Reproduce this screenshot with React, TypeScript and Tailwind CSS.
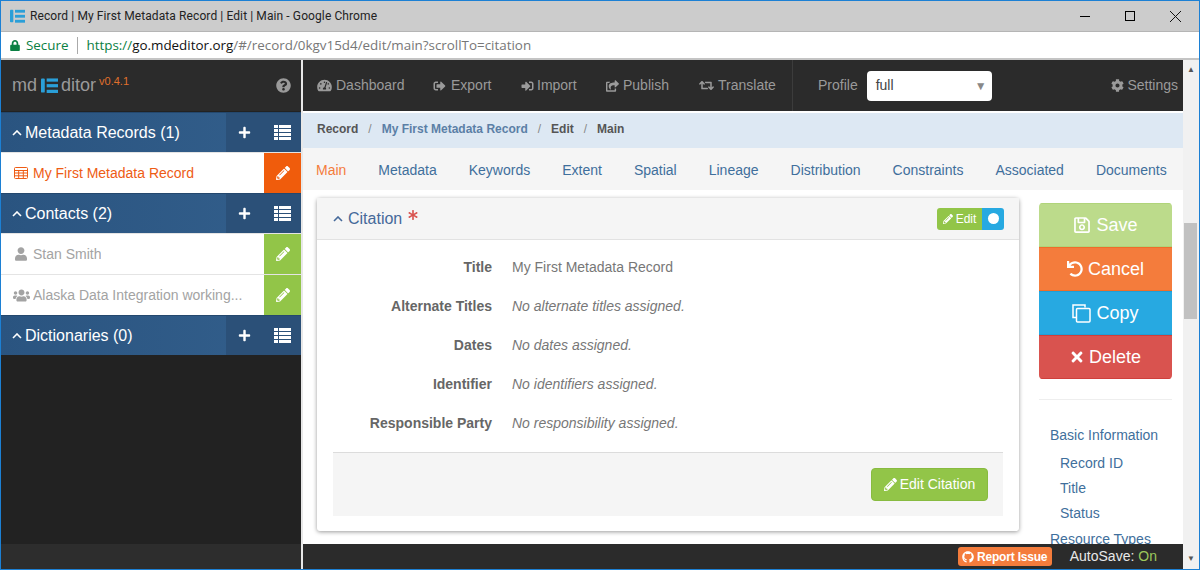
import React from 'react';
import {
  FaAsterisk, FaCog, FaGithub, FaLock, FaPencilAlt, FaPlus, FaQuestionCircle, FaRegSave,
  FaRetweet, FaShareSquare, FaSignInAlt, FaSignOutAlt, FaTachometerAlt, FaTimes, FaUndo, FaUser, FaUsers,
} from 'react-icons/fa';

const Logo: React.FC<{ className?: string }> = ({ className }) => (
  <svg viewBox="0 0 18 18" className={className} fill="#2a9fd8">
    <rect x="0" y="1" width="4" height="15" rx="1" />
    <rect x="6" y="1" width="12" height="3.4" />
    <rect x="6" y="7" width="12" height="3.4" />
    <rect x="6" y="13" width="12" height="3.4" />
  </svg>
);

const Chevron = () => (
  <svg viewBox="0 0 10 6" className="h-[6px] w-[10px] shrink-0" fill="none" stroke="currentColor" strokeWidth="1.6">
    <path d="M1 5l4-4 4 4" />
  </svg>
);

const ListIcon = () => (
  <svg viewBox="0 0 17 15" className="ml-[23px] h-[15px] w-[17px]" fill="currentColor">
    <path d="M0 0h4v3H0zM5 0h12v3H5zM0 4h4v3H0zM5 4h12v3H5zM0 8h4v3H0zM5 8h12v3H5zM0 12h4v3H0zM5 12h12v3H5z" />
  </svg>
);

const TableIcon: React.FC<{ className?: string }> = ({ className }) => (
  <svg viewBox="0 0 14 12" className={className} fill="none" stroke="currentColor" strokeWidth="1">
    <rect x="0.5" y="0.5" width="13" height="11" rx="1" />
    <path d="M0 3.5h14M0 6h14M0 8.8h14M4.7 3v9M9.3 3v9" />
  </svg>
);

const CopyIcon: React.FC<{ className?: string }> = ({ className }) => (
  <svg viewBox="0 0 19 19" className={className} fill="none" stroke="currentColor" strokeWidth="1.5">
    <path d="M13 3.5V1H1v12.5h3" />
    <rect x="4.5" y="4.5" width="13.5" height="13.5" rx="1" />
  </svg>
);

const navLinks = [
  { label: 'Dashboard', Icon: FaTachometerAlt, w: 'w-[116px]', gap: 'gap-[4px]', size: 'h-[13px] w-[15px]' },
  { label: 'Export', Icon: FaSignOutAlt, w: 'w-[88px]', gap: 'gap-[5px]', size: 'h-[12px] w-[13px]' },
  { label: 'Import', Icon: FaSignInAlt, w: 'w-[85px]', gap: 'gap-[3px]', size: 'h-[12px] w-[13px]' },
  { label: 'Publish', Icon: FaShareSquare, w: 'w-[93px]', gap: 'gap-[4px]', size: 'h-[12px] w-[13px]' },
  { label: 'Translate', Icon: FaRetweet, w: 'w-[93px]', gap: 'gap-[4px]', size: 'h-[13px] w-[15px]' },
];

const tabs = ['Main', 'Metadata', 'Keywords', 'Extent', 'Spatial', 'Lineage', 'Distribution', 'Constraints', 'Associated', 'Documents'];

const rows = [
  { label: 'Title', value: 'My First Metadata Record', empty: false },
  { label: 'Alternate Titles', value: 'No alternate titles assigned.', empty: true },
  { label: 'Dates', value: 'No dates assigned.', empty: true },
  { label: 'Identifier', value: 'No identifiers assigned.', empty: true },
  { label: 'Responsible Party', value: 'No responsibility assigned.', empty: true },
];

const actions = [
  { label: 'Save', Icon: FaRegSave, cls: 'bg-[#bcdb8b] border-[#b0d47a]', size: 'h-[18px] w-[18px]' },
  { label: 'Cancel', Icon: FaUndo, cls: 'bg-[#f47c3c] border-[#ee6e2a]', size: 'h-[16px] w-[16px]' },
  { label: 'Copy', Icon: CopyIcon, cls: 'bg-[#27a9e1] border-[#1f9fd6]', size: 'h-[19px] w-[19px]' },
  { label: 'Delete', Icon: FaTimes, cls: 'bg-[#d9534f] border-[#cf3f3b]', size: 'h-[16px] w-[14px]' },
];

const SectionHeader: React.FC<{ title: string }> = ({ title }) => (
  <div className="flex h-[40px] items-center border-t border-[#24486e] bg-gradient-to-r from-[#2a5480] to-[#335f8c] text-white">
    <div className="flex flex-1 items-center gap-[3px] pl-[11px] text-[16px]">
      <Chevron />
      <span>{title}</span>
    </div>
    <div className="flex h-full w-[75px] items-center bg-[#2b5078] pl-[12px]">
      <FaPlus className="h-[13px] w-[13px]" />
      <ListIcon />
    </div>
  </div>
);

const SideItem: React.FC<{ Icon: React.ElementType; label: string; active?: boolean; iconSize?: string }> = ({ Icon, label, active, iconSize }) => (
  <div className={`flex h-[41px] items-center border-t border-[#e4e4e4] bg-white text-[14px] ${active ? 'text-[#ee5c14]' : 'text-[#a3a3a3]'}`}>
    <div className="flex min-w-0 flex-1 items-center">
      <span className="flex w-[32px] shrink-0 justify-center pl-[8px]">
        <Icon className={iconSize ?? 'h-[15px] w-[17px]'} />
      </span>
      <span className="truncate">{label}</span>
    </div>
    <div className={`flex h-full w-[37px] items-center justify-center text-white ${active ? 'bg-[#f05c0c]' : 'bg-[#92c548]'}`}>
      <FaPencilAlt className="h-[14px] w-[14px]" />
    </div>
  </div>
);

export default function App() {
  return (
    <div className="flex h-[570px] w-[1200px] flex-col overflow-hidden border border-[#1c80d4] bg-white font-['Liberation_Sans',sans-serif]">
      {/* browser chrome */}
      <div className="flex h-[31px] shrink-0 items-center border-b border-[#b5b5b5] bg-[#cccccc] pl-[9px] font-['Roboto',sans-serif] text-[12px] tracking-[0.1px] text-[#222]">
        <Logo className="h-[15px] w-[15px]" />
        <span className="ml-[5px] flex-1">Record | My First Metadata Record | Edit | Main - Google Chrome</span>
        <span className="mr-[35px] h-[1px] w-[10px] bg-black" />
        <span className="mr-[35px] h-[10px] w-[10px] border border-black" />
        <svg viewBox="0 0 11 11" className="mr-[18px] h-[11px] w-[11px]" stroke="#111" fill="none"><path d="M0 0l11 11M11 0L0 11" /></svg>
      </div>
      <div className="flex h-[28px] shrink-0 items-center border-b-2 border-[#c4c4c4] bg-white pl-[9px] font-['Open_Sans',sans-serif] text-[13.4px]">
        <FaLock className="h-[11px] w-[10px] text-[#0b8043]" />
        <span className="ml-[6px] text-[#0b8043]">Secure</span>
        <span className="ml-[9px] mr-[8px] h-[17px] w-[1px] bg-[#aaa]" />
        <span className="text-[#0b8043]">https://</span>
        <span className="text-[#111]">go.mdeditor.org</span>
        <span className="text-[#777]">/#/record/0kgv15d4/edit/main?scrollTo=citation</span>
      </div>

      <div className="relative flex min-h-0 flex-1">
        {/* sidebar */}
        <aside className="flex w-[300px] shrink-0 flex-col bg-[#222222]">
          <div className="flex h-[51px] shrink-0 items-center justify-between bg-[#2b2b2b] pl-[11px] pr-[10px] text-[#9a9a9a]">
            <div className="flex items-center text-[18px]">
              <span>md</span>
              <Logo className="ml-[4px] mr-[3px] h-[18px] w-[17px]" />
              <span>ditor</span>
              <span className="-mt-[9px] ml-[3px] text-[11px] text-[#e0702c]">v0.4.1</span>
            </div>
            <FaQuestionCircle className="h-[15px] w-[15px]" />
          </div>
          <div className="mt-[1px] flex flex-col">
            <SectionHeader title="Metadata Records (1)" />
            <SideItem Icon={TableIcon} label="My First Metadata Record" active iconSize="h-[12px] w-[14px]" />
            <SectionHeader title="Contacts (2)" />
            <SideItem Icon={FaUser} label="Stan Smith" iconSize="h-[14px] w-[12px]" />
            <SideItem Icon={FaUsers} label="Alaska Data Integration working..." />
            <SectionHeader title="Dictionaries (0)" />
          </div>
          <div className="flex-1" />
          <div className="h-[25px] shrink-0 bg-[#2d2d2d]" />
        </aside>

        <div className="w-[2px] shrink-0 bg-[#e8e8e8]" />

        {/* main */}
        <main className="relative flex w-[880px] shrink-0 flex-col overflow-hidden">
          <nav className="flex h-[51px] shrink-0 items-center bg-[#2b2b2b] pl-[14px] text-[14px] text-[#9a9a9a]">
            {navLinks.map(({ label, Icon, w, gap, size }) => (
              <div key={label} className={`flex items-center ${gap} ${w}`}>
                <Icon className={size} />
                <span>{label}</span>
              </div>
            ))}
            <div className="h-full w-[1px] bg-[#3c3c3c]" />
            <span className="ml-[25px]">Profile</span>
            <div className="ml-[9px] flex h-[30px] w-[125px] items-center justify-between rounded-[4px] bg-white pl-[9px] pr-[5px] text-[#444]">
              <span>full</span>
              <span className="text-[12px] text-[#888]">▼</span>
            </div>
            <div className="ml-auto flex items-center gap-[3px] pr-[5px]">
              <FaCog className="h-[13px] w-[13px]" />
              <span>Settings</span>
            </div>
          </nav>

          <div className="mt-[2px] flex h-[35px] shrink-0 items-center gap-[10px] bg-[#dde8f3] pb-[4px] pl-[14px] text-[12px] font-bold text-[#555]">
            <span>Record</span>
            <span className="font-normal text-[#888]">/</span>
            <span className="text-[#5b7fa6]">My First Metadata Record</span>
            <span className="font-normal text-[#888]">/</span>
            <span>Edit</span>
            <span className="font-normal text-[#888]">/</span>
            <span>Main</span>
          </div>

          <div className="flex h-[42px] shrink-0 items-center gap-[32px] bg-[#f5f5f5] pl-[13px] pt-[2px] text-[14px] text-[#3f6f9c]">
            {tabs.map((tab, i) => (
              <span key={tab} className={i === 0 ? 'text-[#f47c3c]' : ''}>{tab}</span>
            ))}
          </div>

          <div className="flex flex-1 gap-[20px] pl-[14px] pt-[8px]">
            <section className="h-[333px] w-[702px] shrink-0 rounded-[3px] bg-white shadow-[0_1px_4px_rgba(0,0,0,0.4)]">
              <div className="flex h-[42px] items-center justify-between border-b border-[#e2e2e2] bg-[#f5f5f5] pl-[16px] pr-[15px] text-[#45699a]">
                <div className="flex items-center gap-[5px] text-[16px]">
                  <Chevron />
                  <span>Citation</span>
                  <FaAsterisk className="-mt-[8px] ml-[1px] h-[10px] w-[10px] text-[#d9534f]" />
                </div>
                <div className="flex h-[22px] overflow-hidden rounded-[3px] text-[12px] text-white">
                  <div className="flex w-[45px] items-center justify-center gap-[3px] bg-[#92c548]">
                    <FaPencilAlt className="h-[10px] w-[10px]" />
                    <span>Edit</span>
                  </div>
                  <div className="flex w-[22px] items-center justify-center bg-[#27a9e1]">
                    <span className="h-[11px] w-[11px] rounded-full bg-white" />
                  </div>
                </div>
              </div>
              <div className="flex flex-col pt-[8px] text-[14px]">
                {rows.map((row) => (
                  <div key={row.label} className="flex h-[39px] items-center">
                    <span className="w-[175px] text-right font-bold text-[#666]">{row.label}</span>
                    <span className={`ml-[20px] text-[#777] ${row.empty ? 'italic' : ''}`}>{row.value}</span>
                  </div>
                ))}
              </div>
              <div className="mx-[16px] mt-[9px] flex h-[64px] items-center justify-end border-t border-[#dcdcdc] bg-[#f5f5f5] pr-[15px]">
                <div className="flex h-[33px] w-[117px] items-center justify-center gap-[3px] rounded-[4px] border border-[#88bb40] bg-[#92c548] text-[14px] text-white">
                  <FaPencilAlt className="h-[13px] w-[13px]" />
                  <span>Edit Citation</span>
                </div>
              </div>
            </section>

            <div className="flex w-[133px] shrink-0 flex-col pt-[5px]">
              <div className="flex flex-col overflow-hidden rounded-[4px]">
                {actions.map(({ label, Icon, cls, size }) => (
                  <div key={label} className={`flex h-[44px] items-center justify-center gap-[5px] border-y text-[18px] text-white ${cls}`}>
                    <Icon className={size} />
                    <span>{label}</span>
                  </div>
                ))}
              </div>
              <div className="mt-[20px] border-t border-[#eeeeee] pl-[11px] pt-[26px] text-[14px] text-[#3f6f9c]">
                <div className="leading-[18px]">Basic Information</div>
                <div className="mt-[10px] flex flex-col gap-[7px] pl-[10px] leading-[18px]">
                  <span>Record ID</span>
                  <span>Title</span>
                  <span>Status</span>
                </div>
                <div className="mt-[8px] leading-[18px]">Resource Types</div>
              </div>
            </div>
          </div>

          {/* fixed footer bar over the scrolled content */}
          <div className="absolute inset-x-0 bottom-0 flex h-[25px] items-center justify-end bg-[#2b2b2b] pr-[26px]">
            <div className="flex h-[19px] w-[94px] items-center justify-center gap-[3px] rounded-[3px] bg-[#f47c3c] text-[12px] font-bold tracking-[-0.2px] text-white">
              <FaGithub className="h-[12px] w-[12px]" />
              <span>Report Issue</span>
            </div>
            <span className="ml-[18px] text-[14px] text-[#e8e8e8]">AutoSave:</span>
            <span className="ml-[4px] text-[14px] text-[#9cc85c]">On</span>
          </div>
        </main>

        {/* page scrollbar */}
        <div className="relative flex flex-1 flex-col items-center justify-between bg-[#f1f1f1] py-[4px] text-[8px] text-[#555]">
          <span>▲</span>
          <div className="absolute left-[1px] top-[163px] h-[96px] w-[13px] bg-[#c1c1c1]" />
          <span>▼</span>
        </div>
      </div>
    </div>
  );
}
